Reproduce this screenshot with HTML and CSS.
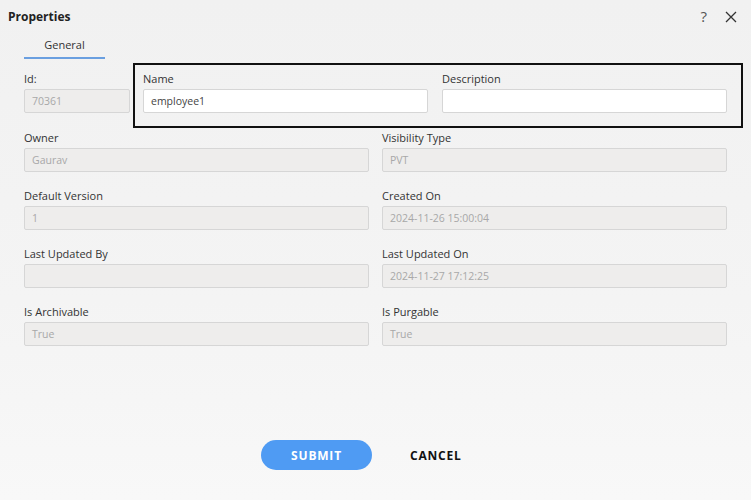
FILE: index.html
```html
<!DOCTYPE html>
<html>
<head>
<meta charset="utf-8">
<link rel="stylesheet" href="styles.css">
</head>
<body>
<div class="dialog">
  <div class="header">
    <div class="title">Properties</div>
    <div class="actions">
      <span class="help">?</span>
      <svg class="close" width="12" height="12" viewBox="0 0 12 12"><path d="M1 1L11 11M11 1L1 11" stroke="#333" stroke-width="1.3" fill="none"/></svg>
    </div>
  </div>
  <div class="tabs">
    <div class="tab active">General</div>
  </div>

  <div class="top-row">
    <div class="field id-field">
      <label>Id:</label>
      <div class="input disabled">70361</div>
    </div>
    <div class="focus-box">
      <div class="field">
        <label>Name</label>
        <div class="input editable">employee1</div>
      </div>
      <div class="field">
        <label>Description</label>
        <div class="input editable"></div>
      </div>
    </div>
  </div>

  <div class="grid">
    <div class="field"><label>Owner</label><div class="input disabled">Gaurav</div></div>
    <div class="field"><label>Visibility Type</label><div class="input disabled">PVT</div></div>
    <div class="field"><label>Default Version</label><div class="input disabled">1</div></div>
    <div class="field"><label>Created On</label><div class="input disabled">2024-11-26 15:00:04</div></div>
    <div class="field"><label>Last Updated By</label><div class="input disabled"></div></div>
    <div class="field"><label>Last Updated On</label><div class="input disabled">2024-11-27 17:12:25</div></div>
    <div class="field"><label>Is Archivable</label><div class="input disabled">True</div></div>
    <div class="field"><label>Is Purgable</label><div class="input disabled">True</div></div>
  </div>

  <div class="footer">
    <button class="btn submit">SUBMIT</button>
    <button class="btn cancel">CANCEL</button>
  </div>
</div>
</body>
</html>
```
FILE: styles.css
```css
* { box-sizing: border-box; }
html, body {
  margin: 0;
  height: 100%;
}
body {
  font-family: "Open Sans", "Noto Sans", sans-serif;
  background: linear-gradient(to bottom, #f1f1f1 0%, #f4f4f4 60%, #f8f8f8 100%);
  color: #333;
}
.dialog {
  width: 751px;
  height: 500px;
  position: relative;
}
.header {
  display: flex;
  justify-content: space-between;
  align-items: center;
  height: 33px;
  padding: 0 14px 0 8px;
}
.title {
  font-size: 12px;
  font-weight: 700;
  color: #222;
}
.actions {
  display: flex;
  align-items: center;
  gap: 18px;
}
.help {
  font-size: 15px;
  color: #555;
  line-height: 1;
}
.close { display: block; }
.tabs {
  display: flex;
  margin-left: 24px;
  height: 26px;
}
.tab {
  width: 81px;
  text-align: center;
  font-size: 11px;
  color: #333;
  padding-top: 4px;
}
.tab.active {
  border-bottom: 2px solid #6a9fe0;
}
.top-row {
  display: flex;
  align-items: flex-start;
  margin-top: 4px;
  padding-left: 24px;
}
.id-field {
  width: 106px;
  margin-top: 8px;
}
.focus-box {
  margin-left: 3px;
  width: 610px;
  height: 65px;
  border: 2px solid #111;
  display: flex;
  gap: 14px;
  padding: 6px 14px 0 8px;
}
.focus-box .field { width: 285px; }
.field label {
  display: block;
  font-size: 11px;
  color: #333;
  height: 16px;
  line-height: 16px;
  margin-bottom: 2px;
}
.input {
  height: 24px;
  border: 1px solid #d6d6d6;
  border-radius: 2px;
  font-size: 10.5px;
  line-height: 23px;
  padding: 0 7px;
}
.input.disabled {
  background: #eeedec;
  color: #a8a8a8;
}
.input.editable {
  background: #fff;
  color: #444;
}
.grid {
  display: grid;
  grid-template-columns: 345px 345px;
  column-gap: 13px;
  row-gap: 16px;
  padding-left: 24px;
  margin-top: 2px;
}
.footer {
  position: absolute;
  left: 261px;
  top: 440px;
  display: flex;
  align-items: center;
  gap: 38px;
}
.btn {
  font-family: "Open Sans", "Noto Sans", sans-serif;
  font-size: 12px;
  font-weight: 700;
  letter-spacing: 0.8px;
  border: none;
  cursor: pointer;
}
.submit {
  width: 111px;
  height: 30px;
  border-radius: 15px;
  background: #4f9bf3;
  color: #fff;
}
.cancel {
  background: none;
  color: #111;
  padding: 0;
}
```
